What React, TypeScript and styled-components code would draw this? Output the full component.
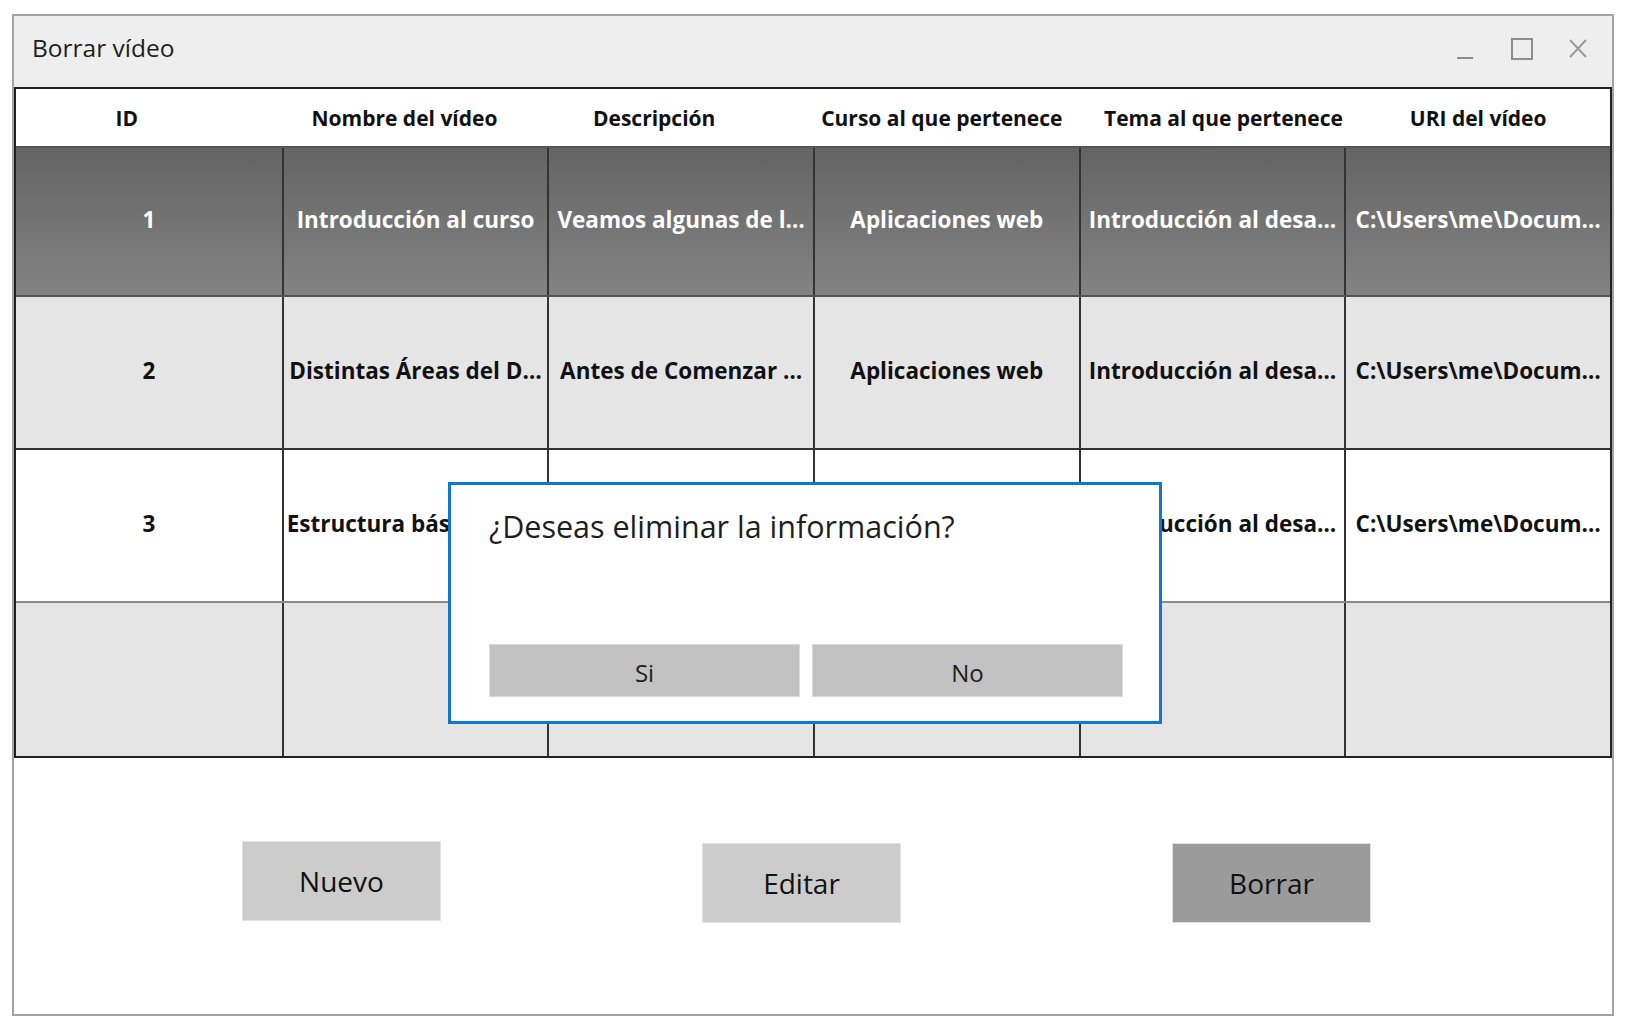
import React from "react";
import styled, { createGlobalStyle } from "styled-components";

const GlobalStyle = createGlobalStyle`
  body {
    margin: 0;
    background: #ffffff;
    font-family: "Open Sans", "Lato", sans-serif;
    color: #111111;
  }
`;

const Page = styled.div`
  padding: 14px 0 0 12px;
`;

const Window = styled.div`
  position: relative;
  box-sizing: border-box;
  width: 1602px;
  height: 1002px;
  border: 2px solid #a3a3a3;
  display: flex;
  flex-direction: column;
`;

const TitleBar = styled.div`
  height: 71px;
  flex-shrink: 0;
  background: #eeeeee;
  display: flex;
  align-items: center;
  justify-content: space-between;
  padding: 0 25px 0 18px;
`;

const Title = styled.span`
  font-size: 24.5px;
  color: #1e1e1e;
  margin-top: -8px;
`;

const Controls = styled.div`
  display: flex;
  align-items: center;
  gap: 38px;
  margin-top: -6px;

  & > svg:last-child {
    margin-left: -2px;
  }
`;

const Table = styled.div`
  border: 2px solid #222222;
  flex-shrink: 0;
`;

const HeaderRow = styled.div`
  display: grid;
  grid-template-columns: repeat(6, 1fr);
  height: 57px;
  background: #ffffff;
`;

const HeaderCell = styled.div<{ $shift: number }>`
  display: flex;
  align-items: center;
  justify-content: center;
  font-size: 21px;
  font-weight: 700;
  padding-left: ${(p) => Math.max(0, p.$shift * 2)}px;
  padding-right: ${(p) => Math.max(0, -p.$shift * 2)}px;
`;

const Row = styled.div<{ $bg: string; $line: string; $h: number; $light?: boolean }>`
  display: grid;
  grid-template-columns: repeat(6, 1fr);
  height: ${(p) => p.$h}px;
  border-top: 2px solid ${(p) => p.$line};
  background: ${(p) => p.$bg};
  color: ${(p) => (p.$light ? "#ffffff" : "#111111")};
`;

const Cell = styled.div`
  display: flex;
  align-items: center;
  justify-content: center;
  min-width: 0;
  padding: 0 3px;
  font-size: 22.5px;
  font-weight: 700;
  border-left: 2px solid #333333;

  &:first-child {
    border-left: none;
  }
`;

const CellText = styled.span`
  overflow: hidden;
  white-space: nowrap;
  text-overflow: ellipsis;
  margin-top: -5px;
`;

const Footer = styled.div`
  flex: 1;
  display: flex;
  align-items: center;
  padding: 0 0 6px 228px;
  gap: 261px;
`;

const ActionButton = styled.button<{ $bg: string; $push?: number; $lift?: number }>`
  width: 199px;
  height: 80px;
  margin-left: ${(p) => p.$push ?? 0}px;
  margin-bottom: ${(p) => p.$lift ?? 0}px;
  border: 1px solid #e2e2e2;
  background: ${(p) => p.$bg};
  font-family: inherit;
  font-size: 28px;
  color: #111111;
  cursor: pointer;
`;

const Dialog = styled.div`
  position: absolute;
  left: 434px;
  top: 466px;
  width: 714px;
  height: 242px;
  box-sizing: border-box;
  border: 3px solid #0b78d4;
  background: #ffffff;
  padding: 20px 36px 24px 38px;
  display: flex;
  flex-direction: column;
  justify-content: space-between;
`;

const DialogText = styled.div`
  font-size: 30.5px;
  color: #1e1e1e;
`;

const DialogButtons = styled.div`
  display: grid;
  grid-template-columns: 1fr 1fr;
  gap: 12px;
`;

const DialogButton = styled.button`
  height: 53px;
  border: 1px solid #dadada;
  background: #c2c2c2;
  font-family: inherit;
  font-size: 24px;
  color: #1e1e1e;
  padding-top: 4px;
`;

const headers: [string, number][] = [
  ["ID", -22],
  ["Nombre del vídeo", -10],
  ["Descripción", -26],
  ["Curso al que pertenece", -4],
  ["Tema al que pertenece", 12],
  ["URI del vídeo", 1],
];

const rows = [
  {
    bg: "linear-gradient(#646464, #838383)",
    line: "#555555",
    h: 147,
    light: true,
    cells: [
      "1",
      "Introducción al curso",
      "Veamos algunas de l…",
      "Aplicaciones web",
      "Introducción al desa…",
      "C:\\Users\\me\\Docum…",
    ],
  },
  {
    bg: "#e5e5e5",
    line: "#555555",
    h: 151,
    cells: [
      "2",
      "Distintas Áreas del D…",
      "Antes de Comenzar …",
      "Aplicaciones web",
      "Introducción al desa…",
      "C:\\Users\\me\\Docum…",
    ],
  },
  {
    bg: "#ffffff",
    line: "#333333",
    h: 151,
    cells: [
      "3",
      "Estructura básica de una página web",
      "Primeros pasos con …",
      "Aplicaciones web",
      "Introducción al desa…",
      "C:\\Users\\me\\Docum…",
    ],
  },
  {
    bg: "#e5e5e5",
    line: "#8a8a8a",
    h: 153,
    cells: ["", "", "", "", "", ""],
  },
];

const App: React.FC = () => {
  return (
    <Page>
      <GlobalStyle />
      <Window>
        <TitleBar>
          <Title>Borrar vídeo</Title>
          <Controls>
            <svg width="16" height="22" viewBox="0 0 16 22">
              <line x1="0" y1="20" x2="16" y2="20" stroke="#8c8c8c" strokeWidth="2" />
            </svg>
            <svg width="22" height="22" viewBox="0 0 22 22">
              <rect x="1" y="1" width="20" height="20" fill="none" stroke="#8c8c8c" strokeWidth="2" />
            </svg>
            <svg width="18" height="19" viewBox="0 0 18 19">
              <path d="M1 1 L17 18 M17 1 L1 18" stroke="#9a9a9a" strokeWidth="2" fill="none" />
            </svg>
          </Controls>
        </TitleBar>

        <Table>
          <HeaderRow>
            {headers.map(([label, shift]) => (
              <HeaderCell key={label} $shift={shift}>
                {label}
              </HeaderCell>
            ))}
          </HeaderRow>
          {rows.map((row, i) => (
            <Row key={i} $bg={row.bg} $line={row.line} $h={row.h} $light={row.light}>
              {row.cells.map((text, j) => (
                <Cell key={j}>
                  <CellText>{text}</CellText>
                </Cell>
              ))}
            </Row>
          ))}
        </Table>

        <Footer>
          <ActionButton $bg="#cccccc" $lift={4}>
            Nuevo
          </ActionButton>
          <ActionButton $bg="#cccccc">Editar</ActionButton>
          <ActionButton $bg="#9b9b9b" $push={10}>
            Borrar
          </ActionButton>
        </Footer>

        <Dialog>
          <DialogText>¿Deseas eliminar la información?</DialogText>
          <DialogButtons>
            <DialogButton>Si</DialogButton>
            <DialogButton>No</DialogButton>
          </DialogButtons>
        </Dialog>
      </Window>
    </Page>
  );
};

export default App;
